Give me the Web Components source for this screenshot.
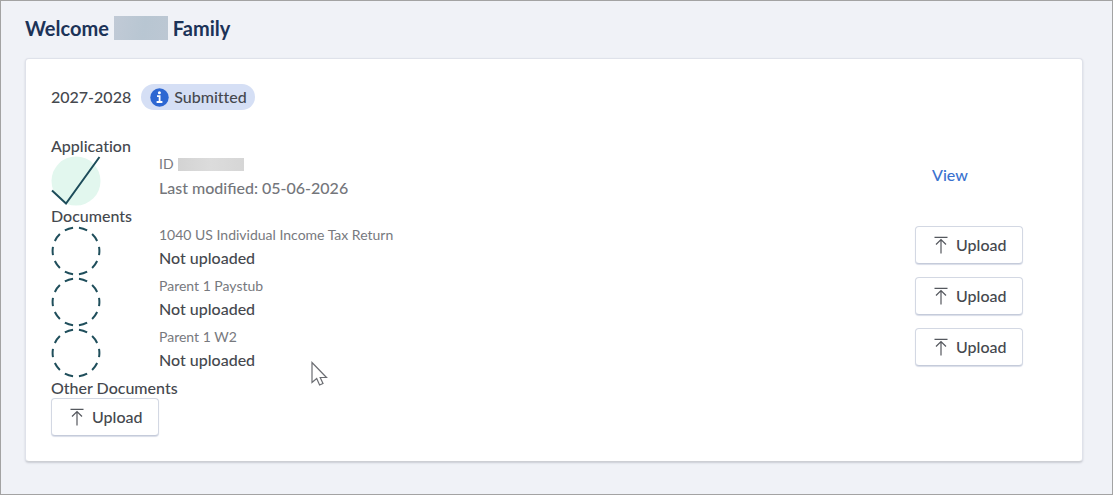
<!DOCTYPE html>
<html lang="en">
<head>
<meta charset="utf-8">
<title>Family dashboard</title>
<style>
  * {box-sizing:border-box;}
  html {height:100%;}
  body {margin:0; min-height:100%; display:flex; flex-direction:column; background:#f0f2f7; border:1px solid #a3a3a3; font:500 16px/20px Lato, "Noto Sans", sans-serif; font-variant-ligatures:none; color:#45484e;}
</style>
</head>
<body>
<family-dashboard></family-dashboard>
<script>
function attach(el, html) {
    el.attachShadow({mode: 'open'}).innerHTML = html;
}

customElements.define('redacted-text', class extends HTMLElement {
    constructor() {
	super();
	attach(this, `
<style>
  :host {display:inline-block; flex:none; width:66px; height:13px; background:linear-gradient(90deg, #d3d3d3, #dcdcdc 50%, #d6d6d6);}
  :host([large]) {width:54px; height:24px; background:linear-gradient(100deg, #c1cad6, #b8c6d2 55%, #bcc7d3);}
</style>`);
    }
});

customElements.define('status-badge', class extends HTMLElement {
    constructor() {
	super();
	attach(this, `
<style>
  :host {display:inline-flex; align-items:center; gap:5px; height:26px; padding:0 8px 0 9px; border-radius:13px; background:#d5dff5;}
  svg {display:block; flex:none;}
</style>
<svg width="19" height="19" viewBox="0 0 19 19" aria-hidden="true">
  <circle cx="9.5" cy="9.5" r="9.2" fill="#2d67d2"/>
  <circle cx="9.4" cy="4.8" r="1.5" fill="#fff"/>
  <path d="M7 8.2h2.6v5.6M6.600 14h5.800" fill="none" stroke="#fff" stroke-width="1.8"/>
</svg>
<slot></slot>`);
    }
});

customElements.define('step-icon', class extends HTMLElement {
    constructor() {
	super();
	let done = this.hasAttribute("done");
	attach(this, `
<style>
  :host {display:block; width:50px; height:50px;}
  svg {display:block; overflow:visible;}
</style>
<svg width="50" height="50" viewBox="0 0 50 50" fill="none" aria-hidden="true">` + (done ? `
  <circle cx="25" cy="25" r="24.5" fill="#e2f7ee"/>
  <path d="M1 34.5L15 47.5L48.5 1" stroke="#1d4c5a" stroke-width="2"/>` : `
  <circle cx="25" cy="25" r="23.4" stroke="#1f4e5b" stroke-width="2" pathLength="120" stroke-dasharray="7 5" stroke-dashoffset="3.5"/>`) + `
</svg>`);
    }
});

customElements.define('upload-button', class extends HTMLElement {
    constructor() {
	super();
	attach(this, `
<style>
  :host {display:block;}
  button {display:flex; align-items:center; justify-content:center; gap:8px; height:38px; padding:0 16px 0 18px; border:1px solid #d3d8e3; border-bottom-color:#c5cbda; border-radius:4px; background:#fff; box-shadow:0 1px 1px #d9dde8; font:inherit; color:inherit; cursor:pointer;}
  svg {display:block; flex:none;}
</style>
<button type="button">
  <svg width="14" height="18" viewBox="0 0 14 18" fill="none" stroke="#55585e" stroke-width="1.2" aria-hidden="true">
    <path d="M0.5 1.3H13.5M7 17.5V3.5M2 8.5L7 3.5L12 8.5"/>
  </svg>
  <slot>Upload</slot>
</button>`);
    }
});

customElements.define('checklist-row', class extends HTMLElement {
    constructor() {
	super();
	attach(this, `
<style>
  :host {display:grid; grid-template-columns:108px 1fr 142px; align-items:start; min-height:50px;}
  .title {display:flex; align-items:center; gap:4px; font-size:14px; font-weight:400; line-height:18px; color:#77797e;}
  .state {line-height:28px;}
  :host([muted]) .title {line-height:16px;}
  :host([muted]) .state {line-height:32px; font-variant-ligatures:normal; color:#74767b;}
  .action {display:flex;}
</style>
<slot name="icon"></slot>
<div>
  <div class="title"><slot name="title"></slot></div>
  <div class="state"><slot></slot></div>
</div>
<div class="action"><slot name="action"></slot></div>`);
    }
});

customElements.define('checklist-section', class extends HTMLElement {
    constructor() {
	super();
	attach(this, `
<style>
  :host {display:block;}
  h2 {margin:0; font:inherit; font-variant-ligatures:none;}
  .rows {display:flex; flex-direction:column; align-items:stretch; gap:1px;}
  ::slotted(upload-button) {align-self:flex-start;}
</style>
<h2></h2>
<div class="rows"><slot></slot></div>`);
	this.shadowRoot.querySelector("h2").textContent = this.getAttribute("heading");
    }
});

customElements.define('family-dashboard', class extends HTMLElement {
    constructor() {
	super();
	attach(this, `
<style>
  :host {display:block; padding:14px 29px 24px 24px;}
  h1 {display:flex; align-items:center; gap:5px; margin:0 0 17px; font-size:20px; line-height:26px; font-weight:700; color:#1c3358;}
  main {display:block; padding:25px; border:1px solid #dfe2ea; border-bottom-color:#cdcfd4; border-radius:4px; background:#fff; box-shadow:0 1px 2px #c9ccd4;}
  .year {display:flex; align-items:center; gap:10px; margin-bottom:26px;}
  a {padding:9px 17px; color:#3a72cf; text-decoration:none;}
  .pointer {position:absolute; left:311px; top:361px;}
</style>
<h1>Welcome <redacted-text large></redacted-text> Family</h1>
<main>
  <div class="year"><span>2027-2028</span><status-badge>Submitted</status-badge></div>
  <checklist-section heading="Application">
    <checklist-row muted>
      <step-icon slot="icon" done></step-icon>
      <span slot="title">ID</span><redacted-text slot="title"></redacted-text>
      Last modified: 05-06-2026
      <a slot="action" href="#application">View</a>
    </checklist-row>
  </checklist-section>
  <checklist-section heading="Documents">
    <checklist-row>
      <step-icon slot="icon"></step-icon>
      <span slot="title">1040 US Individual Income Tax Return</span>
      Not uploaded
      <upload-button slot="action">Upload</upload-button>
    </checklist-row>
    <checklist-row>
      <step-icon slot="icon"></step-icon>
      <span slot="title">Parent 1 Paystub</span>
      Not uploaded
      <upload-button slot="action">Upload</upload-button>
    </checklist-row>
    <checklist-row>
      <step-icon slot="icon"></step-icon>
      <span slot="title">Parent 1 W2</span>
      Not uploaded
      <upload-button slot="action">Upload</upload-button>
    </checklist-row>
  </checklist-section>
  <checklist-section heading="Other Documents">
    <upload-button>Upload</upload-button>
  </checklist-section>
</main>
<svg class="pointer" width="18" height="26" viewBox="0 0 18 26" aria-hidden="true">
  <path d="M1 1.5V21.5L5.7 17.5L8.6 24L12 22.5L9.2 16.5H15.5Z" fill="#fff" stroke="#6b6d72" stroke-width="1.2"/>
</svg>`);
    }
});
</script>
</body>
</html>
